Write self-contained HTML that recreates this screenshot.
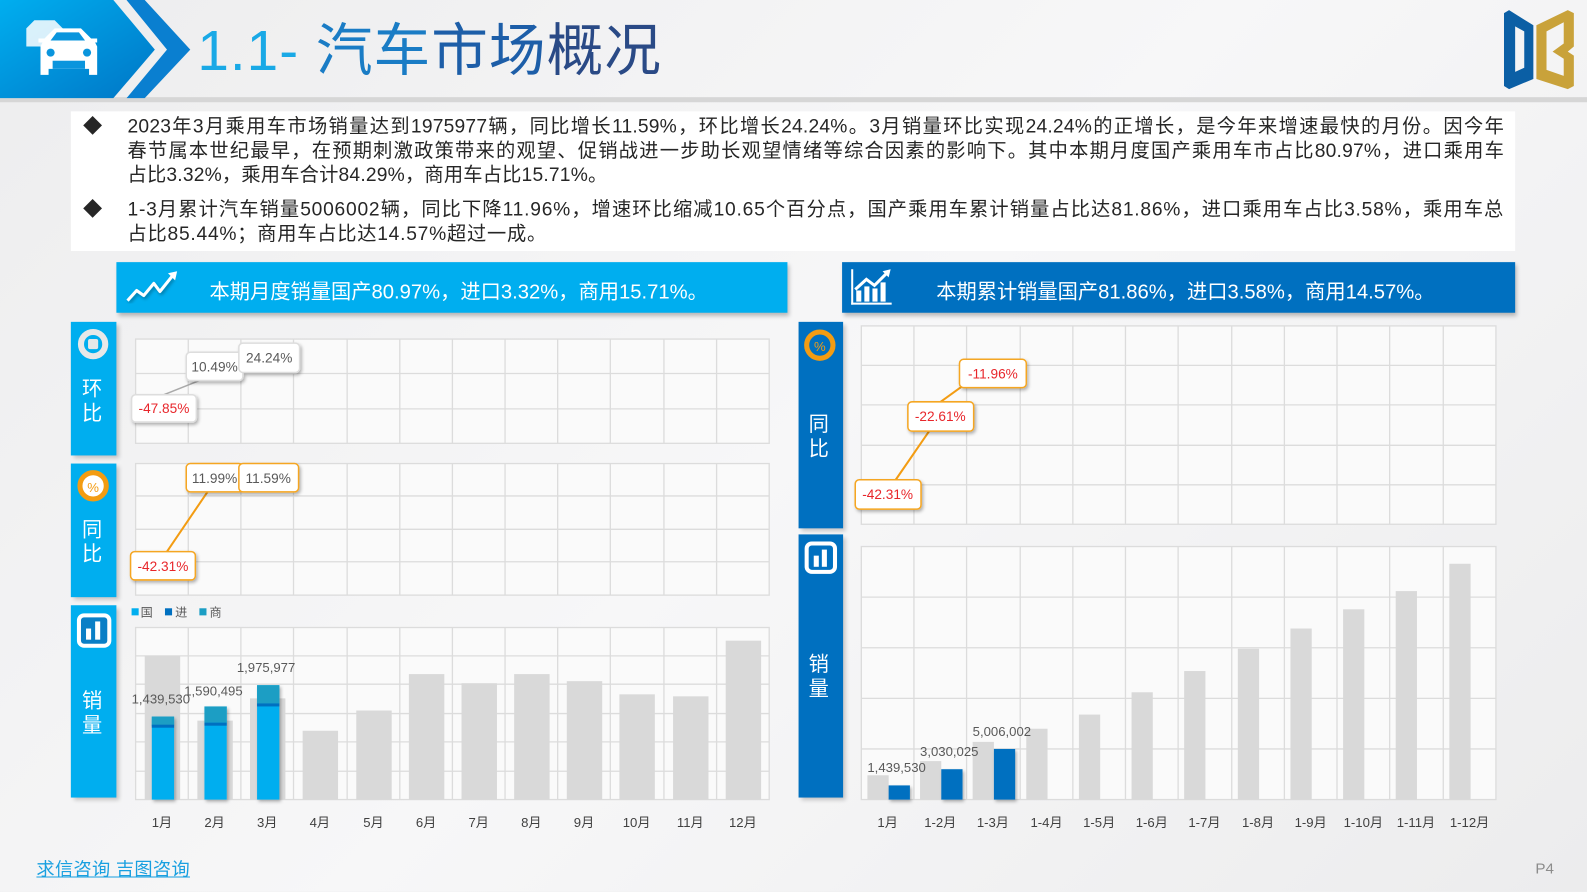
<!DOCTYPE html>
<html><head><meta charset="utf-8"><style>
html,body{margin:0;padding:0;width:1587px;height:892px;overflow:hidden;background:#efeff0;}
#w{position:absolute;left:0;top:0;width:1568px;height:881px;transform:scale(1.01212);transform-origin:0 0;
font-family:"Liberation Sans","Noto Sans CJK SC",sans-serif;background:linear-gradient(135deg,#ededee 0%,#f7f7f8 50%,#ececed 100%);}
.a{position:absolute;}
.txt{font-size:19px;color:#262626;line-height:24px;}
.p{letter-spacing:0.75px;}
.ln{white-space:nowrap;text-align:justify;text-align-last:justify;letter-spacing:0.2px;}
</style></head><body><div id="w">
<div class="a" style="left:0;top:96px;width:1568px;height:5px;background:#d6d6d6"></div>
<svg class="a" style="left:0;top:0" width="200" height="98">
<defs><linearGradient id="hg" x1="0" y1="0" x2="1" y2="1"><stop offset="0" stop-color="#00aeef"/><stop offset="1" stop-color="#0076c6"/></linearGradient></defs>
<polygon points="0,0 112,0 153,49 112,97 0,97" fill="url(#hg)"/>
<polygon points="125,0 143,0 188,49 143,97 125,97 165,49" fill="#0a7fd0"/>
<g fill="#fff">
<path d="M26 28 L34 20 L54 20 L62 28 L62 46 L26 46Z" opacity=".85"/>
<path d="M46 36 L54 28 L80 28 L90 38 L96 38 L96 42 L94 42 L96 46 L96 74 L88 74 L88 68 L48 68 L48 74 L40 74 L40 46 L42 42 L38 42 L38 38 L44 38Z"/>
</g>
<g fill="#0a95dd"><path d="M50 40 L56 32 L78 32 L84 40Z"/><circle cx="50" cy="52" r="4"/><circle cx="86" cy="52" r="4"/><rect x="52" y="60" width="32" height="8"/></g>
</svg>
<div class="a" style="left:195px;top:16px;font-size:56px;line-height:68px;letter-spacing:1px;white-space:nowrap"><span style="color:#19a9e6">1.1- </span><span style="color:#1a7cc5">汽车</span><span style="color:#1d5ea8">市场</span><span style="color:#2a4a86">概况</span></div>
<svg class="a" style="left:1480px;top:8px" width="86" height="84">
<path d="M6 5 L11 2 L35 17 L35 70 L11 80 L6 77Z M17 18 L17 63 L26 59 L26 23Z" fill="#0b5fa5" fill-rule="evenodd"/>
<path d="M38 17 L69 2 L75 5 L75 38 L69 43 L75 47 L75 77 L69 80 L38 70Z M48 23 L48 61 L65 67 L65 50 L54 43 L65 35 L65 14Z" fill="#c9a23a" fill-rule="evenodd"/>
</svg>
<div class="a" style="left:70px;top:110px;width:1427px;height:138px;background:#fff"></div>
<div class="a txt" style="left:82px;top:114px">◆</div>
<div class="a txt" style="left:126px;top:114px;width:1360px">
<div class="ln">2023年3月乘用车市场销量达到1975977辆，同比增长11.59%，环比增长24.24%。3月销量环比实现24.24%的正增长，是今年来增速最快的月份。因今年</div>
<div class="ln">春节属本世纪最早，在预期刺激政策带来的观望、促销战进一步助长观望情绪等综合因素的影响下。其中本期月度国产乘用车市占比80.97%，进口乘用车</div>
<div style="white-space:nowrap;letter-spacing:0.2px">占比3.32%，乘用车合计84.29%，商用车占比15.71%。</div>
</div>
<div class="a txt" style="left:82px;top:196px">◆</div>
<div class="a txt p" style="left:126px;top:196px;width:1360px;text-align:justify">1-3月累计汽车销量5006002辆，同比下降11.96%，增速环比缩减10.65个百分点，国产乘用车累计销量占比达81.86%，进口乘用车占比3.58%，乘用车总占比85.44%；商用车占比达14.57%超过一成。</div>
<div class="a" style="left:115px;top:259px;width:663px;height:50px;background:#00aeef;box-shadow:2px 3px 4px rgba(0,0,0,.25)"></div>
<div class="a" style="left:207px;top:272px;font-size:20px;color:#fff;white-space:nowrap">本期月度销量国产80.97%，进口3.32%，商用15.71%。</div>
<div class="a" style="left:832px;top:259px;width:665px;height:50px;background:#0070c0;box-shadow:2px 3px 4px rgba(0,0,0,.25)"></div>
<div class="a" style="left:925px;top:272px;font-size:20px;color:#fff;white-space:nowrap">本期累计销量国产81.86%，进口3.58%，商用14.57%。</div>
<div class="a" style="left:70px;top:318px;width:45px;height:132px;background:#00aeef;box-shadow:3px 3px 4px rgba(0,0,0,.2)"></div>
<div class="a" style="left:70px;top:458px;width:45px;height:132px;background:#00aeef;box-shadow:3px 3px 4px rgba(0,0,0,.2)"></div>
<div class="a" style="left:70px;top:598px;width:45px;height:190px;background:#00aeef;box-shadow:3px 3px 4px rgba(0,0,0,.2)"></div>
<div class="a" style="left:789px;top:318px;width:44px;height:204px;background:#0070c0;box-shadow:3px 3px 4px rgba(0,0,0,.2)"></div>
<div class="a" style="left:789px;top:528px;width:44px;height:260px;background:#0070c0;box-shadow:3px 3px 4px rgba(0,0,0,.2)"></div>
<div class="a" style="left:81px;top:373px;font-size:20px;line-height:24px;color:#fff;width:24px">环<br>比</div>
<div class="a" style="left:81px;top:512px;font-size:20px;line-height:24px;color:#fff;width:24px">同<br>比</div>
<div class="a" style="left:81px;top:681px;font-size:20px;line-height:24px;color:#fff;width:24px">销<br>量</div>
<div class="a" style="left:799px;top:408px;font-size:20px;line-height:24px;color:#fff;width:24px">同<br>比</div>
<div class="a" style="left:799px;top:645px;font-size:20px;line-height:24px;color:#fff;width:24px">销<br>量</div>
<div class="a" style="left:36px;top:845px;font-size:18px;color:#19a0e0;text-decoration:underline;white-space:nowrap;letter-spacing:0.3px">求信咨询 吉图咨询</div>
<div class="a" style="left:1517px;top:850px;font-size:15px;color:#8c8c8c">P4</div>
<svg class="a" style="left:0;top:0" width="1568" height="881" font-family="Liberation Sans, Noto Sans CJK SC, sans-serif">
<defs><filter id="sh"><feDropShadow dx="1.5" dy="2" stdDeviation="1.5" flood-opacity=".3"/></filter></defs>
<g fill="none" stroke="#fff" stroke-width="3" stroke-linejoin="round" filter="url(#sh)"><polyline points="126,297 135,287 142,292 152,280 158,288 170,273"/></g>
<polygon points="166,270 175,268 173,277" fill="#fff"/>
<g fill="#fff"><rect x="841" y="266" width="2" height="35"/><rect x="841" y="299" width="40" height="2"/>
<rect x="846" y="287" width="5" height="11"/><rect x="854" y="283" width="5" height="15"/><rect x="862" y="285" width="5" height="13"/><rect x="870" y="279" width="5" height="19"/></g>
<polyline points="845,286 856,276 864,282 876,270" fill="none" stroke="#fff" stroke-width="3"/>
<polygon points="872,268 880,266 878,274" fill="#fff"/>
<circle cx="92" cy="340" r="12" fill="none" stroke="#e8e8e8" stroke-width="6"/><rect x="87" y="335" width="10" height="10" rx="2" fill="#e8e8e8"/>
<circle cx="92" cy="480" r="13" fill="#fff" stroke="#f39c12" stroke-width="5"/><text x="92" y="486" font-size="13" fill="#f39c12" text-anchor="middle">%</text>
<rect x="78" y="608" width="30" height="30" rx="5" fill="#0a7fc6" stroke="#fff" stroke-width="4"/><rect x="85" y="621" width="5" height="11" fill="#fff"/><rect x="94" y="614" width="5" height="18" fill="#fff"/>
<circle cx="810" cy="341" r="13" fill="#0070c0" stroke="#f39c12" stroke-width="5"/><text x="810" y="347" font-size="13" fill="#f39c12" text-anchor="middle">%</text>
<rect x="797" y="537" width="28" height="28" rx="5" fill="#0070c0" stroke="#fff" stroke-width="4"/><rect x="804" y="549" width="5" height="11" fill="#fff"/><rect x="812" y="543" width="5" height="17" fill="#fff"/>
<g fill="#fafafa" stroke="#dcdcdc" stroke-width="1.3">
<rect x="134" y="335" width="626" height="103"/><rect x="134" y="458" width="626" height="130"/><rect x="134" y="620" width="626" height="170"/>
<rect x="851" y="322" width="627" height="196"/><rect x="851" y="540" width="627" height="250"/></g>
<g stroke="#dcdcdc" stroke-width="1.3">
<path d="M186 335V438M238 335V438M290 335V438M343 335V438M395 335V438M447 335V438M499 335V438M551 335V438M603 335V438M656 335V438M708 335V438M134 369H760M134 404H760"/>
<path d="M186 458V588M238 458V588M290 458V588M343 458V588M395 458V588M447 458V588M499 458V588M551 458V588M603 458V588M656 458V588M708 458V588M134 490H760M134 523H760M134 555H760"/>
<path d="M186 620V790M238 620V790M290 620V790M343 620V790M395 620V790M447 620V790M499 620V790M551 620V790M603 620V790M656 620V790M708 620V790M134 648H760M134 676H760M134 705H760M134 733H760M134 762H760"/>
<path d="M903 322V518M955 322V518M1008 322V518M1060 322V518M1112 322V518M1164 322V518M1217 322V518M1269 322V518M1321 322V518M1373 322V518M1426 322V518M851 361H1478M851 400H1478M851 440H1478M851 479H1478"/>
<path d="M903 540V790M955 540V790M1008 540V790M1060 540V790M1112 540V790M1164 540V790M1217 540V790M1269 540V790M1321 540V790M1373 540V790M1426 540V790M851 590H1478M851 640H1478M851 690H1478M851 740H1478"/>
</g>
<g fill="#d9d9d9">
<rect x="143" y="648" width="35" height="142"/><rect x="195" y="712" width="35" height="78"/><rect x="247" y="690" width="35" height="100"/>
<rect x="299" y="722" width="35" height="68"/><rect x="352" y="702" width="35" height="88"/><rect x="404" y="666" width="35" height="124"/>
<rect x="456" y="675" width="35" height="115"/><rect x="508" y="666" width="35" height="124"/><rect x="560" y="673" width="35" height="117"/>
<rect x="612" y="686" width="35" height="104"/><rect x="665" y="688" width="35" height="102"/><rect x="717" y="633" width="35" height="157"/></g>
<g filter="url(#sh)">
<rect x="150" y="708" width="22" height="82" fill="#00aeef"/><rect x="150" y="708" width="22" height="9" fill="#1b9ec4"/><rect x="150" y="716" width="22" height="3" fill="#0070c0"/>
<rect x="202" y="698" width="22" height="92" fill="#00aeef"/><rect x="202" y="698" width="22" height="16" fill="#1b9ec4"/><rect x="202" y="714" width="22" height="3" fill="#0070c0"/>
<rect x="254" y="677" width="22" height="113" fill="#00aeef"/><rect x="254" y="677" width="22" height="18" fill="#1b9ec4"/><rect x="254" y="695" width="22" height="3" fill="#0070c0"/></g>
<g font-size="13" fill="#595959"><text x="130" y="695">1,439,530</text><text x="182" y="687">1,590,495</text><text x="234" y="664">1,975,977</text></g>
<rect x="130" y="601" width="7" height="7" fill="#00aeef"/><rect x="163" y="601" width="7" height="7" fill="#0070c0"/><rect x="197" y="601" width="7" height="7" fill="#1b9ec4"/>
<g font-size="12" fill="#595959"><text x="139" y="609">国</text><text x="173" y="609">进</text><text x="207" y="609">商</text></g>
<g fill="#d9d9d9">
<rect x="857" y="766" width="21" height="24"/><rect x="909" y="752" width="21" height="38"/><rect x="961" y="733" width="21" height="57"/>
<rect x="1014" y="720" width="21" height="70"/><rect x="1066" y="706" width="21" height="84"/><rect x="1118" y="684" width="21" height="106"/>
<rect x="1170" y="663" width="21" height="127"/><rect x="1223" y="641" width="21" height="149"/><rect x="1275" y="621" width="21" height="169"/>
<rect x="1327" y="602" width="21" height="188"/><rect x="1379" y="584" width="21" height="206"/><rect x="1432" y="557" width="21" height="233"/></g>
<g fill="#0070c0" filter="url(#sh)"><rect x="878" y="776" width="21" height="14"/><rect x="930" y="760" width="21" height="30"/><rect x="982" y="740" width="21" height="50"/></g>
<g font-size="13" fill="#595959"><text x="857" y="763">1,439,530</text><text x="909" y="747">3,030,025</text><text x="961" y="727">5,006,002</text></g>
<g font-size="13" fill="#404040" text-anchor="middle">
<text x="160" y="817">1月</text><text x="212" y="817">2月</text><text x="264" y="817">3月</text><text x="316" y="817">4月</text><text x="369" y="817">5月</text><text x="421" y="817">6月</text><text x="473" y="817">7月</text><text x="525" y="817">8月</text><text x="577" y="817">9月</text><text x="629" y="817">10月</text><text x="682" y="817">11月</text><text x="734" y="817">12月</text>
<text x="877" y="817">1月</text><text x="929" y="817">1-2月</text><text x="981" y="817">1-3月</text><text x="1034" y="817">1-4月</text><text x="1086" y="817">1-5月</text><text x="1138" y="817">1-6月</text><text x="1190" y="817">1-7月</text><text x="1243" y="817">1-8月</text><text x="1295" y="817">1-9月</text><text x="1347" y="817">1-10月</text><text x="1399" y="817">1-11月</text><text x="1452" y="817">1-12月</text></g>
<line x1="162" y1="390" x2="212" y2="370" stroke="#aaa" stroke-width="1.5"/>
<line x1="165" y1="545" x2="205" y2="486" stroke="#f39c12" stroke-width="2"/>
<line x1="885" y1="474" x2="918" y2="426" stroke="#f39c12" stroke-width="2"/>
<line x1="928" y1="398" x2="953" y2="380" stroke="#f39c12" stroke-width="2"/>
<g filter="url(#sh)" fill="#fff" stroke-width="1.5">
<rect x="130" y="390" width="64" height="27" rx="4" stroke="#ddd"/><rect x="184" y="348" width="56" height="28" rx="4" stroke="#ddd"/><rect x="236" y="339" width="60" height="29" rx="4" stroke="#ddd"/>
<rect x="129" y="545" width="64" height="28" rx="4" stroke="#f5a623"/><rect x="184" y="458" width="56" height="28" rx="4" stroke="#f5a623"/><rect x="236" y="458" width="59" height="28" rx="4" stroke="#f5a623"/>
<rect x="948" y="355" width="66" height="28" rx="4" stroke="#f5a623"/><rect x="897" y="397" width="65" height="29" rx="4" stroke="#f5a623"/><rect x="845" y="474" width="65" height="29" rx="4" stroke="#f5a623"/></g>
<g font-size="13.5" text-anchor="middle">
<text x="162" y="408" fill="#e8262b">-47.85%</text><text x="212" y="367" fill="#595959">10.49%</text><text x="266" y="358" fill="#595959">24.24%</text>
<text x="161" y="564" fill="#e8262b">-42.31%</text><text x="212" y="477" fill="#595959">11.99%</text><text x="265" y="477" fill="#595959">11.59%</text>
<text x="981" y="374" fill="#e8262b">-11.96%</text><text x="929" y="416" fill="#e8262b">-22.61%</text><text x="877" y="493" fill="#e8262b">-42.31%</text></g>
</svg>
</div></body></html>
